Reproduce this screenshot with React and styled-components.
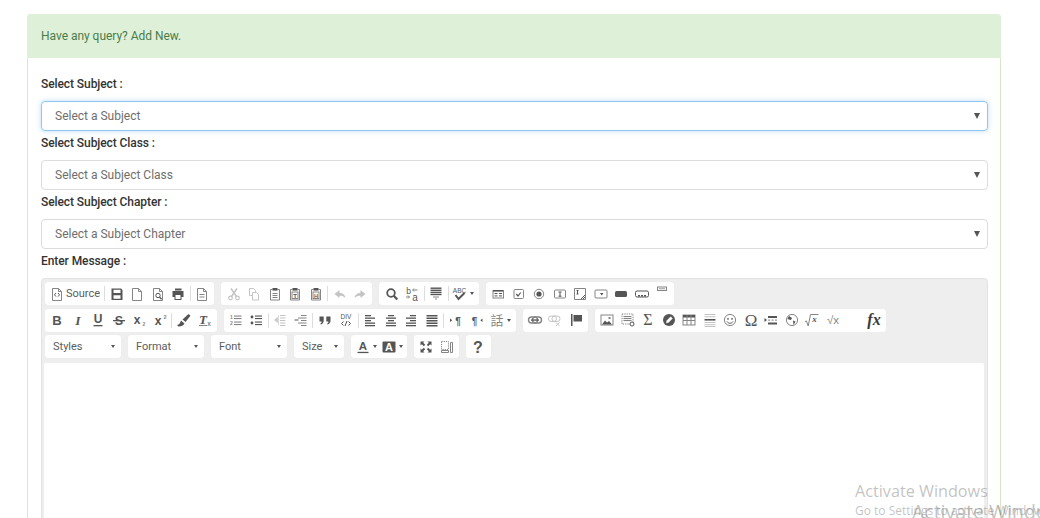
import React from 'react';
import styled, { createGlobalStyle } from 'styled-components';

const Global = createGlobalStyle`
  html, body { margin: 0; padding: 0; background: #fff; height: 518px; overflow: hidden; }
  body { font-family: Roboto, "Liberation Sans", sans-serif; }
`;

const Page = styled.div`
  position: relative;
  width: 1040px;
  height: 518px;
  overflow: hidden;
  padding: 14px 39px 0 27px;
  box-sizing: border-box;
`;
const Card = styled.section`
  border: 1px solid #d6e9c6;
  border-radius: 4px 4px 0 0;
  height: 560px;
  box-sizing: border-box;
`;
const CardHeader = styled.header`
  height: 44px;
  margin: -1px -1px 0;
  background: #dff0d8;
  border-radius: 4px 4px 0 0;
  display: flex;
  align-items: center;
  padding: 0 14px;
  font-size: 12px;
  letter-spacing: -.03px;
  color: #4a7c4b;
`;
const CardBody = styled.div`
  padding: 14px 12px 0 13px;
`;
const FieldLabel = styled.label`
  display: block;
  font-size: 12px;
  line-height: 17px;
  font-weight: 500;
  letter-spacing: -.08px;
  color: #333;
  margin: 4px 0 8px;
`;
const SelectBox = styled.div`
  height: 30px;
  box-sizing: border-box;
  display: flex;
  align-items: center;
  justify-content: space-between;
  padding: 0 7px 0 13px;
  background: #fff;
  border-radius: 4px;
  font-size: 12px;
  color: #6e6e6e;
  border: ${p => (p.$focus ? '1.5px solid #93c6ef' : '1.5px solid #dcdcdc')};
  box-shadow: ${p => (p.$focus ? '0 0 5px rgba(102,175,233,.45)' : 'none')};
`;
const SelectArrow = styled.span`
  width: 0;
  height: 0;
  border-left: 3.5px solid transparent;
  border-right: 3.5px solid transparent;
  border-top: 6px solid #555;
`;
const Editor = styled.div`
  height: 300px;
  box-sizing: border-box;
  background: #eee;
  border: 1px solid #e2e2e2;
  border-radius: 4px 4px 0 0;
  padding: 3px 3px 0 2px;
`;
const ToolRow = styled.div`
  display: flex;
  gap: 7px;
  height: 23.5px;
  margin: 0 0 3px 1px;
`;
const Group = styled.div`
  display: flex;
  align-items: center;
  padding: 0 2px;
  height: 23px;
  background: #fff;
  border-radius: 3px;
  box-shadow: 0 0 1px rgba(0,0,0,.06);
`;
const Btn = styled.span`
  flex: none;
  width: ${p => p.$w || 20.5}px;
  height: 23px;
  display: flex;
  align-items: center;
  justify-content: ${p => p.$align || 'center'};
  padding: ${p => p.$pad || '0'};
  box-sizing: border-box;
  font-size: 11px;
  color: #5c5c5c;
`;
const Sep = styled.span`
  flex: none;
  width: 3.5px;
  height: 15px;
  display: flex;
  justify-content: center;
  &::before { content: ''; width: 1px; background: #ddd; }
`;
const Caret = styled.span`
  flex: none;
  width: 0;
  height: 0;
  margin-left: 2px;
  border-left: 2.5px solid transparent;
  border-right: 2.5px solid transparent;
  border-top: 3px solid #555;
`;
const SourceLabel = styled.span`
  margin-left: 1px;
`;
const Combo = styled.span`
  width: ${p => p.$w}px;
  box-sizing: border-box;
  height: 23px;
  display: flex;
  align-items: center;
  justify-content: space-between;
  padding: 0 6px 0 8px;
  font-size: 11px;
  color: #5c5c5c;
  background: #fff;
  border-radius: 3px;
  box-shadow: 0 0 1px rgba(0,0,0,.06);
`;
const Content = styled.div`
  background: #fff;
  height: 200px;
  border-radius: 2px;
  margin-top: 4.5px;
`;
const Glyph = styled.svg`
  flex: none;
  width: 16px;
  height: 16px;
  display: block;
  overflow: visible;
`;
const Watermark = styled.span`
  position: absolute;
  white-space: nowrap;
  pointer-events: none;
  left: ${p => p.$x}px;
  top: ${p => p.$y}px;
  font-family: "Open Sans", sans-serif;
  font-size: ${p => p.$size}px;
  color: rgba(120,120,120,.45);
`;

const D = '#555';
const M = '#858585';
const Lt = '#c4c4c4';
const serif = '"Liberation Serif", serif';
const sans = '"Liberation Sans", sans-serif';

const Bars = ({ r, f = D, h = 1.3 }) => r.map(([x, y, w], i) => <rect key={i} x={x} y={y} width={w} height={h} fill={f} />);
const Page1 = ({ s = M }) => <path d="M3.5 2.5h6l3 3v9h-9z M9.5 2.5v3h3" fill="none" stroke={s} />;
const Clip = ({ children }) => (
  <>
    <path d="M5.5 3.5h-2v10.5h9V3.5h-2" fill="none" stroke={M} />
    <rect x="5.5" y="2" width="5" height="2.6" fill={D} />
    {children}
  </>
);
const Tx = ({ x = 8, y = 12, s = 11, w = 'bold', it, f = D, fam = sans, anchor = 'middle', children }) => (
  <text x={x} y={y} fontSize={s} fontWeight={w} fontStyle={it ? 'italic' : 'normal'} fill={f} fontFamily={fam} textAnchor={anchor}>{children}</text>
);

const ICONS = {
  source: <><Page1 /><path d="M7 7L5.5 8.8 7 10.6M9 7l1.5 1.8L9 10.6" fill="none" stroke={D} /></>,
  save: <path fillRule="evenodd" d="M2.5 2.5h9.5l1.5 1.5v10h-11zM4.5 3.7v3.4h7V3.7zM4.5 9.3v3.5h7V9.3z" fill={D} />,
  newpage: <Page1 />,
  preview: <><Page1 /><circle cx="8" cy="9.5" r="2.2" fill="none" stroke={D} /><path d="M9.6 11.2l2 2" stroke={D} strokeWidth="1.3" /></>,
  print: <><rect x="5" y="2.5" width="6.5" height="2" fill={D} /><rect x="2.5" y="5" width="11" height="6" fill={D} /><rect x="5" y="8.5" width="6" height="5" fill="#fff" stroke={D} /></>,
  templates: <><Page1 /><Bars r={[[5.5, 8, 5], [5.5, 10.5, 5]]} f={M} h={1} /></>,
  cut: <><path d="M5 2.5l5.5 8M11 2.5l-5.5 8" stroke={Lt} strokeWidth="1.5" /><circle cx="4.5" cy="12" r="1.8" fill="none" stroke={Lt} strokeWidth="1.2" /><circle cx="11.5" cy="12" r="1.8" fill="none" stroke={Lt} strokeWidth="1.2" /></>,
  copy: <><path d="M3.5 2.5h4l2 2v5h-6z" fill="none" stroke={Lt} /><path d="M6.5 6.5h4l2 2v5.5h-6z" fill="#fff" stroke={Lt} /></>,
  paste: <Clip><Bars r={[[5.5, 7, 5], [5.5, 9, 5], [5.5, 11, 5]]} f={M} h={1} /></Clip>,
  pastet: <Clip><rect x="5" y="6" width="6" height="6.5" fill="none" stroke={M} /><Tx y={11.6} s={6} f={D}>T</Tx></Clip>,
  pastew: <Clip><rect x="5" y="6" width="6" height="6.5" fill="none" stroke={M} /><Tx y={11.6} s={5.5} f={D}>H</Tx></Clip>,
  undo: <path d="M7.5 4L2.5 8l5 4V9.7c2.5 0 4.5.6 6 2.3-.4-3.2-2.8-5-6-5.2z" fill={Lt} />,
  redo: <path d="M8.5 4l5 4-5 4V9.7c-2.5 0-4.5.6-6 2.3.4-3.2 2.8-5 6-5.2z" fill={Lt} />,
  find: <><circle cx="7" cy="7" r="3.8" fill="none" stroke={D} strokeWidth="1.8" /><path d="M9.8 9.8l3.5 3.7" stroke={D} strokeWidth="2.2" /></>,
  replace: <><Tx x={4.5} y={8} s={8.5} w="normal">b</Tx><Tx x={11} y={14.5} s={10} w="normal">a</Tx><path d="M9 4h4.5M10 2.5L8.5 4 10 5.5M2 11h3.5M4 9.5L5.5 11 4 12.5" fill="none" stroke={M} /></>,
  selectall: <><Bars r={[[2.5, 1.5, 11], [2.5, 3.6, 11], [2.5, 5.7, 11], [2.5, 7.8, 11]]} h={1.4} /><Bars r={[[5, 10.5, 6], [7, 12.5, 2]]} f={M} h={1} /></>,
  spell: <><Tx x={7.5} y={7} s={6.5} w="normal">ABC</Tx><path d="M3.5 9l3 4 6-6" fill="none" stroke={D} strokeWidth="2" /></>,
  form: <><rect x="3" y="4.5" width="10.5" height="7.5" fill="none" stroke={M} /><Bars r={[[3, 4, 10]]} h={1.6} /><Bars r={[[4.5, 7, 3], [9, 7, 3], [4.5, 9.4, 3], [9, 9.4, 3]]} h={1} /></>,
  checkbox: <><rect x="3" y="3.5" width="9.5" height="9" rx="1" fill="none" stroke={M} /><path d="M5.3 8l1.7 2 2.7-3.5" fill="none" stroke={D} strokeWidth="1.2" /></>,
  radio: <><circle cx="8" cy="8" r="4.7" fill="none" stroke={M} /><circle cx="8" cy="8" r="2.6" fill={D} /></>,
  text: <><rect x="2.5" y="4" width="11" height="8" rx="1" fill="none" stroke={M} /><path d="M6.5 6h3M8 6v4.2M6.5 10.2h3" stroke={D} /></>,
  textarea: <><path d="M2.5 2.5h11v11h-11z" fill="none" stroke={M} /><path d="M4.5 4.5h2M5.5 4.5v3.5M4.5 8h2" stroke={D} /><path d="M9 13l4-4M11 13l2-2" stroke={D} /></>,
  select: <><rect x="2" y="4" width="12" height="8" rx="1" fill="none" stroke={M} /><path d="M7 7h3.5L8.75 9.5z" fill={D} /></>,
  button: <rect x="2" y="5" width="12" height="6" rx="1.5" fill={D} />,
  imagebutton: <><rect x="1.5" y="5" width="13" height="6" rx="1.5" fill="#fff" stroke={D} /><Bars r={[[4, 9, 2], [7, 9, 2], [10, 9, 2]]} h={1.5} /></>,
  hidden: <><rect x="3.5" y="1" width="9" height="3.5" fill="#fff" stroke={M} /><Bars r={[[5, 2.4, 6]]} f={M} h={.8} /></>,
  bold: <Tx s={13} y={12.5} fam={sans}>B</Tx>,
  italic: <Tx s={13.5} y={12.5} it fam={serif}>I</Tx>,
  underline: <><Tx s={12} y={11}>U</Tx><Bars r={[[3.5, 13, 9]]} h={1.3} /></>,
  strike: <><Tx s={12.5} y={12.5}>S</Tx><Bars r={[[2, 8, 12]]} h={1.3} /></>,
  sub: <><Tx x={6} s={12} y={12}>x</Tx><Tx x={13} s={5} y={14} f={M}>2</Tx></>,
  sup: <><Tx x={6} s={12} y={13}>x</Tx><Tx x={13} s={5.5} y={7} f={M}>2</Tx></>,
  brush: <><path d="M2.5 14.5L1 13c2.4-.5 3.4-2.2 4-4.5l3.5 3c-1 2-3.5 3.2-6 3z" fill={D} /><path d="M6.5 7.5l6-5.5 2 1.8L9.5 10z" fill={D} /></>,
  removef: <><Tx x={7} s={13} y={11.5} it fam={serif}>T</Tx><Bars r={[[3, 13, 8]]} f={M} h={1} /><Tx x={13} s={6.5} y={14} f={M}>x</Tx></>,
  ol: <><Tx x={3.5} s={5} y={7} f={M}>1</Tx><Tx x={3.5} s={5} y={13} f={M}>2</Tx><Bars r={[[6, 3.5, 7.5], [6, 6, 7.5], [6, 9.5, 7.5], [6, 12, 7.5]]} f={M} h={1.1} /></>,
  ul: <><circle cx="4" cy="5" r="1.4" fill={D} /><circle cx="4" cy="11" r="1.4" fill={D} /><Bars r={[[7, 3.5, 7], [7, 6, 7], [7, 9.5, 7], [7, 12, 7]]} h={1.1} /></>,
  outdent: <><Bars r={[[8, 3, 5.5], [8, 5.5, 5.5], [8, 8, 5.5], [8, 10.5, 5.5], [8, 13, 5.5]]} f={Lt} h={1} /><path d="M2.5 8l3-2.5v5zM6.5 3v10.5" fill={Lt} stroke={Lt} strokeWidth=".6" /></>,
  indent: <><Bars r={[[8, 3, 5.5], [5, 5.5, 8.5], [8, 8, 5.5], [5, 10.5, 8.5], [8, 13, 5.5]]} f={M} h={1} /><path d="M1.5 8h4" stroke={D} /></>,
  quote: <path d="M2.5 4.5h4.2v4c0 2-1 3.5-3 4l-.4-1c1-.4 1.4-1.2 1.4-2H2.5zM9.3 4.5h4.2v4c0 2-1 3.5-3 4l-.4-1c1-.4 1.4-1.2 1.4-2H9.3z" fill={D} />,
  div: <><Tx y={7} s={6.5} w="normal" fam={sans}>DIV</Tx><path d="M5.5 9.5L3.5 11.5l2 2M10.5 9.5l2 2-2 2M9 9l-2 5" fill="none" stroke={D} /></>,
  left: <Bars r={[[3, 3, 6], [3, 5.5, 10], [3, 8, 6], [3, 10.5, 10], [3, 13, 10]]} h={1.3} />,
  center: <Bars r={[[5, 3, 6], [3, 5.5, 10], [5, 8, 6], [3, 10.5, 10], [3, 13, 10]]} h={1.3} />,
  right: <Bars r={[[7, 3, 6], [3, 5.5, 10], [7, 8, 6], [3, 10.5, 10], [3, 13, 10]]} h={1.3} />,
  justify: <Bars r={[[2.5, 3, 11], [2.5, 5.5, 11], [2.5, 8, 11], [2.5, 10.5, 11], [2.5, 13, 11]]} h={1.5} />,
  ltr: <><path d="M2 6.5l2.2 1.7L2 10z" fill={D} /><Tx x={10} y={12.5} s={10} w="bold">¶</Tx></>,
  rtl: <><path d="M14.5 6.5l-2.2 1.7 2.2 1.7z" fill={D} /><Tx x={6.5} y={12.5} s={10} w="bold">¶</Tx></>,
  lang: <Tx x={8} y={13} s={13} w="normal" fam={'"Noto Sans CJK TC", sans-serif'} f={M}>話</Tx>,
  link: <><rect x="1.5" y="5" width="9" height="6" rx="3" fill="none" stroke={M} strokeWidth="1.4" /><rect x="5.5" y="5" width="9" height="6" rx="3" fill="none" stroke={M} strokeWidth="1.4" /><Bars r={[[4, 7.4, 8]]} h={1.3} /></>,
  unlink: <><rect x="1.5" y="4" width="8" height="5.5" rx="2.7" fill="none" stroke={Lt} /><rect x="5" y="4" width="8" height="5.5" rx="2.7" fill="none" stroke={Lt} /><path d="M9 10.5l3.5 3.5M12.5 10.5L9 14" stroke={Lt} /></>,
  anchor: <path d="M3 2h1.5v12H3zM5.5 3h8.5v6.5H5.5z" fill={D} />,
  image: <><rect x="2" y="3" width="12" height="10" fill="none" stroke={M} /><path d="M3 12.5l3-4 2 2 2-1.5 3 3.5z" fill={D} /><rect x="9.5" y="5" width="2" height="2" fill={M} /></>,
  flash: <><rect x="2" y="2" width="11" height="10" fill="none" stroke={M} strokeDasharray="1.3 1" /><Bars r={[[3.5, 4, 8], [3.5, 6, 8], [3.5, 8, 8]]} f={M} h={1.1} /><circle cx="12" cy="12" r="2" fill="#fff" stroke={D} /></>,
  sigma: <Tx y={13} s={16} w="normal" f={D} fam={serif}>Σ</Tx>,
  pencil: <><circle cx="8" cy="8" r="6" fill={D} /><path d="M5 11.3l.7-2.7 4-4 2 2-4 4z" fill="#fff" /></>,
  table: <><rect x="2" y="3" width="12" height="10" fill="none" stroke={M} /><Bars r={[[2, 3, 12]]} f={D} h={2.5} /><path d="M6 3v10M10 3v10M2 8.5h12" stroke={M} /></>,
  hr: <><Bars r={[[2.5, 2, 11], [2.5, 4.2, 11]]} f={Lt} h={1} /><Bars r={[[2.5, 7, 11]]} h={1.6} /><Bars r={[[2.5, 10, 11], [2.5, 12.2, 11], [2.5, 14, 11]]} f={Lt} h={1} /></>,
  smiley: <><circle cx="8" cy="8" r="5.6" fill="none" stroke={M} /><circle cx="6" cy="6.8" r=".9" fill={D} /><circle cx="10" cy="6.8" r=".9" fill={D} /><path d="M5 9.5c1.5 2.4 4.5 2.4 6 0" fill="none" stroke={D} /></>,
  omega: <Tx y={13.5} s={17} w="normal" fam={serif}>Ω</Tx>,
  pagebreak: <><path d="M1.5 6l2.5 2-2.5 2z" fill={D} /><Bars r={[[5, 4, 9], [5, 10.5, 9]]} h={2} /><Bars r={[[5, 7.6, 2.2], [8.5, 7.6, 2.2], [12, 7.6, 2]]} f={M} h={1} /></>,
  iframe: <><circle cx="8" cy="8" r="5.6" fill="none" stroke={M} /><path d="M5 4l3 2-1 2-2-.5-1.6-.5zM9 8.5l2.5 1-2 3.5z" fill={D} /></>,
  sqrt2: <><path d="M1 9.5l1.5-.5 1.7 5L6.5 2.5h8" fill="none" stroke={M} /><Tx x={10.5} y={9.5} s={9} it fam={serif}>x</Tx></>,
  sqrt: <Tx x={8} y={12} s={11.5} w="normal" f={M}>√x</Tx>,
  fx: <Tx x={8} y={12.5} s={16} it fam={serif} f="#3a3a3a">fx</Tx>,
  colorA: <><Tx x={8} y={11} s={11.5}>A</Tx><Bars r={[[2.5, 12.8, 11]]} h={1.3} /></>,
  colorB: <><rect x="1.5" y="2.5" width="13" height="11" rx="1" fill={D} /><Tx x={8} y={12} s={11} f="#fff">A</Tx></>,
  maximize: <path d="M2.5 2.5h4l-1.3 1.3 2 2L5.8 7.2l-2-2-1.3 1.3zM13.5 2.5v4l-1.3-1.3-2 2-1.4-1.4 2-2-1.3-1.3zM2.5 13.5v-4l1.3 1.3 2-2 1.4 1.4-2 2 1.3 1.3zM13.5 13.5h-4l1.3-1.3-2-2 1.4-1.4 2 2 1.3-1.3z" fill={D} />,
  blocks: <><rect x="2.5" y="2.5" width="7" height="8" fill="none" stroke={M} strokeDasharray="1.2 1" /><path d="M2.5 11.5h7v2h-7zM11.5 3.5h2v10h-2z" fill="none" stroke={M} /></>,
  about: <Tx x={8} y={13.5} s={16} fam={sans}>?</Tx>,
};

const Icon = ({ k }) => <Glyph viewBox="0 0 16 16">{ICONS[k]}</Glyph>;

const Tool = ({ item }) => {
  if (item === '|') return <Sep />;
  if (item === 'source') {
    return <Btn $w={55.75} $align="flex-start" $pad="0 0 0 2px"><Icon k="source" /><SourceLabel>Source</SourceLabel></Btn>;
  }
  if (item === 'spell' || item === 'lang') {
    return <Btn $w={27}><Icon k={item} /><Caret /></Btn>;
  }
  if (item === 'colorA' || item === 'colorB') {
    return <Btn $w={26}><Icon k={item} /><Caret /></Btn>;
  }
  if (item === 'fx') return <Btn $w={41} $align="flex-end" $pad="0 2px 0 0"><Icon k="fx" /></Btn>;
  if (item === 'div') return <Btn $w={21.5}><Icon k="div" /></Btn>;
  return <Btn><Icon k={item} /></Btn>;
};

const Toolbar = ({ groups }) => (
  <ToolRow>
    {groups.map((g, i) => (
      <Group key={i}>{g.map((item, j) => <Tool key={j} item={item} />)}</Group>
    ))}
  </ToolRow>
);

const ROW1 = [
  ['source', '|', 'save', 'newpage', 'preview', 'print', '|', 'templates'],
  ['cut', 'copy', 'paste', 'pastet', 'pastew', '|', 'undo', 'redo'],
  ['find', 'replace', '|', 'selectall', '|', 'spell'],
  ['form', 'checkbox', 'radio', 'text', 'textarea', 'select', 'button', 'imagebutton', 'hidden'],
];
const ROW2 = [
  ['bold', 'italic', 'underline', 'strike', 'sub', 'sup', '|', 'brush', 'removef'],
  ['ol', 'ul', '|', 'outdent', 'indent', '|', 'quote', 'div', '|', 'left', 'center', 'right', 'justify', '|', 'ltr', 'rtl', 'lang'],
  ['link', 'unlink', 'anchor'],
  ['image', 'flash', 'sigma', 'pencil', 'table', 'hr', 'smiley', 'omega', 'pagebreak', 'iframe', 'sqrt2', 'sqrt', 'fx'],
];
const COMBOS = [['Styles', 76], ['Format', 76], ['Font', 76], ['Size', 50]];
const FIELDS = [
  ['Select Subject :', 'Select a Subject', true],
  ['Select Subject Class :', 'Select a Subject Class', false],
  ['Select Subject Chapter :', 'Select a Subject Chapter', false],
];

export default function App() {
  return (
    <Page>
      <Global />
      <Card>
        <CardHeader>Have any query? Add New.</CardHeader>
        <CardBody>
          {FIELDS.map(([label, placeholder, focus]) => (
            <div key={label}>
              <FieldLabel>{label}</FieldLabel>
              <SelectBox $focus={focus}>{placeholder}<SelectArrow /></SelectBox>
            </div>
          ))}
          <FieldLabel>Enter Message :</FieldLabel>
          <Editor>
            <Toolbar groups={ROW1} />
            <Toolbar groups={ROW2} />
            <ToolRow>
              {COMBOS.map(([name, w]) => <Combo key={name} $w={w}>{name}<Caret /></Combo>)}
              <Group><Tool item="colorA" /><Tool item="colorB" /></Group>
              <Group><Tool item="maximize" /><Tool item="blocks" /></Group>
              <Group><Tool item="about" /></Group>
            </ToolRow>
            <Content />
          </Editor>
        </CardBody>
      </Card>
      <Watermark $x={855} $y={480} $size={16.2}>Activate Windows</Watermark>
      <Watermark $x={855} $y={502} $size={12}>Go to Settings to activate Windows.</Watermark>
      <Watermark $x={912} $y={498} $size={19.5}>Activate Windows</Watermark>
    </Page>
  );
}
